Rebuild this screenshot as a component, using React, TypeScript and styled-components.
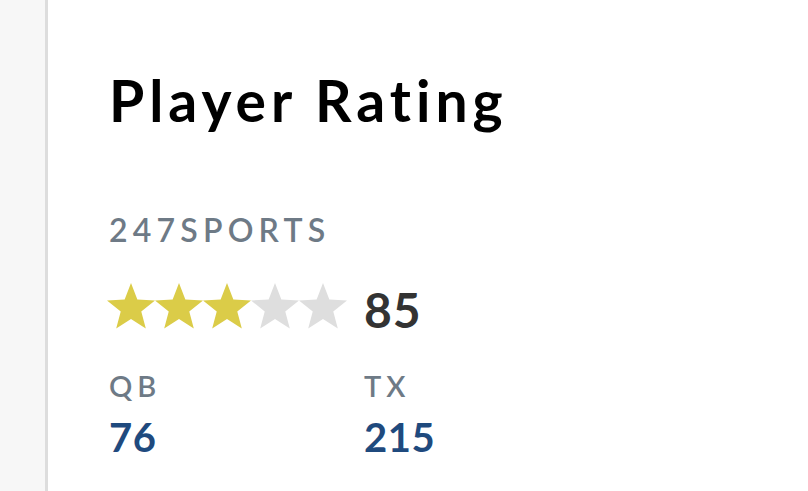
import React from 'react';
import styled, { createGlobalStyle } from 'styled-components';

const GlobalStyle = createGlobalStyle`
  html, body {
    margin: 0;
    padding: 0;
    background: #fff;
    font-family: Lato, "Liberation Sans", sans-serif;
  }
`;

const Page = styled.div`
  display: flex;
  min-height: 491px;
`;

const Sidebar = styled.div`
  width: 45px;
  background: #f7f7f7;
  border-right: 3px solid #dddddd;
  flex-shrink: 0;
`;

const Content = styled.div`
  padding: 66px 0 0 61px;
`;

const Title = styled.h1`
  margin: 0;
  font-size: 57px;
  font-weight: 700;
  color: #000;
  letter-spacing: 5px;
  line-height: 68px;
`;

const Source = styled.div`
  margin-top: 78px;
  font-size: 32px;
  font-weight: 600;
  color: #6e7a86;
  letter-spacing: 5.2px;
  line-height: 36px;
`;

const RatingRow = styled.div`
  display: flex;
  align-items: flex-end;
  margin-top: 35px;
`;

const Stars = styled.div`
  display: flex;
  margin-left: -2px;
`;

const Score = styled.span`
  margin-left: 17px;
  font-size: 48px;
  font-weight: 700;
  color: #333;
  letter-spacing: 1px;
  line-height: 38px;
`;

const Stats = styled.div`
  display: grid;
  grid-template-columns: 255px 100px;
  margin-top: 39px;
`;

const StatLabel = styled.div`
  font-size: 29px;
  font-weight: 600;
  color: #6e7a86;
  letter-spacing: 5px;
  line-height: 36px;
`;

const StatValue = styled.div`
  margin-top: 13px;
  font-size: 40px;
  font-weight: 700;
  color: #1f4a7e;
  letter-spacing: 0.5px;
  line-height: 40px;
`;

const Star = ({ filled }: { filled: boolean }) => (
  <svg width="48" height="46" viewBox="0 0 48 46">
    <polygon
      points="24,0 30.35,16.46 48,17.41 34.27,28.54 38.81,45.6 24,36 9.19,45.6 13.73,28.54 0,17.41 17.65,16.46"
      fill={filled ? '#dbcc48' : '#dedede'}
    />
  </svg>
);

const stats = [
  { label: 'QB', value: '76' },
  { label: 'TX', value: '215' },
];

export default function App() {
  return (
    <>
      <GlobalStyle />
      <Page>
        <Sidebar />
        <Content>
          <Title>Player Rating</Title>
          <Source>247SPORTS</Source>
          <RatingRow>
            <Stars>
              {[0, 1, 2, 3, 4].map(i => (
                <Star key={i} filled={i < 3} />
              ))}
            </Stars>
            <Score>85</Score>
          </RatingRow>
          <Stats>
            {stats.map(s => (
              <StatLabel key={s.label}>{s.label}</StatLabel>
            ))}
            {stats.map(s => (
              <StatValue key={s.label}>{s.value}</StatValue>
            ))}
          </Stats>
        </Content>
      </Page>
    </>
  );
}
